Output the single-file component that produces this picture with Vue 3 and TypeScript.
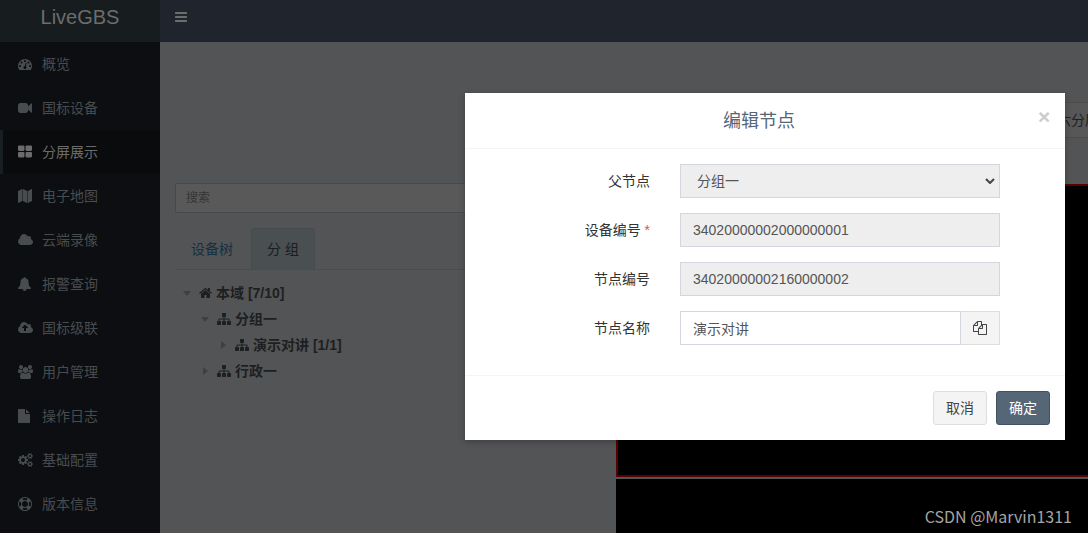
<script setup lang="ts">
import { ref } from 'vue'

interface Icon { box: string; d: string }

const cloud = 'm640 288q0 159-112.5 271.5t-271.5 112.5h-1088q-185 0-316.5-131.5t-131.5-316.5q0-132 71-241.5t187-163.5q-2-28-2-43 0-212 150-362t362-150q158 0 286.5 88t187.5 230q70-62 166-62 106 0 181 75t75 181q0 75-41 138 129 30 213 134.5t84 239.5z'
const dot = 'q0-53-37.5-90.5t-90.5-37.5-90.5 37.5-37.5 90.5 37.5 90.5 90.5 37.5 90.5-37.5 37.5-90.5z'
const pane = 'v384q0 52-38 90t-90 38h-512q-52 0-90-38t-38-90v-384q0-52 38-90t90-38h512q52 0 90 38t38 90z'
const bar = 'v128q0 26-19 45t-45 19h-1408q-26 0-45-19t-19-45v-128q0-26 19-45t45-19h1408q26 0 45 19t19 45z'
const smallCog = 'v140q0 16-149 31-12 27-30 52 51 113 51 138 0 4-4 7-122 71-124 71-8 0-46-47t-52-68q-20 2-30 2t-30-2q-14 21-52 68t-46 47q-2 0-124-71-4-3-4-7 0-25 51-138-18-25-30-52-149-15-149-31v-140q0-16 149-31 13-29 30-52-51-113-51-138 0-4 4-7 4-2 35-20t59-34 30-16q8 0 46 46.5t52 67.5q20-2 30-2t30 2q51-71 92-112l6-2q4 0 124 70 4 3 4 7 0 25-51 138 17 23 30 52 149 15 149 31z'
const cogHole = 'q0-52-38-90t-90-38-90 38-38 90q0 53 37.5 90.5t90.5 37.5 90.5-37.5 37.5-90.5z'

const icons: Record<string, Icon> = {
  bars: { box: '128 0 1536 1792', d: `M1664 1344${bar}M1664 832${bar}M1664 320${bar}` },
  dashboard: {
    box: '0 0 1792 1792',
    d: `M384 1152${dot}M576 704${dot}M1004 1185l101-382q6-26-7.5-48.5t-38.5-29.5-48 6.5-30 39.5l-101 382q-60 5-107 43.5t-63 98.5q-20 77 20 146t117 89 146-20 89-117q16-60-6-117t-72-91zM1664 1152${dot}M1024 512${dot}M1472 704${dot}M1792 1152q0 261-141 483-19 29-54 29h-1402q-35 0-54-29-141-221-141-483 0-182 71-348t191-286 286-191 348-71 348 71 286 191 191 286 71 348z`,
  },
  video: { box: '0 0 1792 1792', d: 'M1792 352v1088q0 42-39 59-13 5-25 5-27 0-45-19l-403-403v166q0 119-84.5 203.5t-203.5 84.5h-704q-119 0-203.5-84.5t-84.5-203.5v-704q0-119 84.5-203.5t203.5-84.5h704q119 0 203.5 84.5t84.5 203.5v165l403-402q18-19 45-19 12 0 25 5 39 17 39 59z' },
  panes: { box: '64 64 1664 1664', d: `M832 1024${pane}M832 256${pane}M1728 1024${pane}M1728 256${pane}` },
  map: { box: '0 0 1792 1792', d: 'M512 0q13 0 22.5 9.5t9.5 22.5v1472q0 20-17 28l-480 256q-7 4-15 4-13 0-22.5-9.5t-9.5-22.5v-1472q0-20 17-28l480-256q7-4 15-4zm1248 0q13 0 22.5 9.5t9.5 22.5v1472q0 20-17 28l-480 256q-7 4-15 4-13 0-22.5-9.5t-9.5-22.5v-1472q0-20 17-28l480-256q7-4 15-4zm-1120 0q8 0 14 3l512 256q18 10 18 29v1472q0 13-9.5 22.5t-22.5 9.5q-8 0-14-3l-512-256q-18-10-18-29v-1472q0-13 9.5-22.5t22.5-9.5z' },
  cloud: { box: '64 0 1920 1792', d: `M1344 864${cloud}` },
  bell: { box: '64 0 1664 1792', d: 'M912 1696q0-16-16-16-59 0-101.5-42.5t-42.5-101.5q0-16-16-16t-16 16q0 73 51.5 124.5t124.5 51.5q16 0 16-16zm816-288q0 52-38 90t-90 38h-448q0 106-75 181t-181 75-181-75-75-181h-448q-52 0-90-38t-38-90q50-42 91-88t85-119.5 74.5-158.5 50-206 19.5-260q0-152 117-282.5t307-158.5q-8-19-8-39 0-40 28-68t68-28 68 28 28 68q0 20-8 39 190 28 307 158.5t117 282.5q0 139 19.5 260t50 206 74.5 158.5 85 119.5 91 88z' },
  upload: { box: '64 0 1920 1792', d: `M1344 864q0-14-9-23l-352-352q-9-9-23-9t-23 9l-351 351q-10 12-10 24 0 14 9 23t23 9h224v352q0 13 9.5 22.5t22.5 9.5h192q13 0 22.5-9.5t9.5-22.5v-352h224q13 0 22.5-9.5t9.5-22.5z${cloud}` },
  users: { box: '-64 0 1920 1792', d: 'M529 896q-162 5-265 128h-134q-82 0-138-40.5t-56-118.5q0-353 124-353 6 0 43.5 21t97.5 42.5 119 21.5q67 0 133-23-5 37-5 66 0 159 81 256zm1071 637q0 120-73 189.5t-194 69.5h-874q-121 0-194-69.5t-73-189.5q0-53 3.5-103.5t14-109 26.5-108.5 43-97.5 62-81 85.5-53.5 111.5-20q10 0 43 21.5t73 48 107 48 135 21.5 135-21.5 107-48 73-48 43-21.5q61 0 111.5 20t85.5 53.5 62 81 43 97.5 26.5 108.5 14 109 3.5 103.5zm-1024-1277q0 106-75 181t-181 75-181-75-75-181 75-181 181-75 181 75 75 181zm704 384q0 159-112.5 271.5t-271.5 112.5-271.5-112.5-112.5-271.5 112.5-271.5 271.5-112.5 271.5 112.5 112.5 271.5zm576 225q0 78-56 118.5t-138 40.5h-134q-103-123-265-128 81-97 81-256 0-29-5-66 66 23 133 23 59 0 119-21.5t97.5-42.5 43.5-21q124 0 124 353zm-128-609q0 106-75 181t-181 75-181-75-75-181 75-181 181-75 181 75 75 181z' },
  file: { box: '128 0 1536 1792', d: 'M1152 512v-472q22 14 36 28l408 408q14 14 28 36h-472zm-128 32q0 40 28 68t68 28h544v1056q0 40-28 68t-68 28h-1344q-40 0-68-28t-28-68v-1600q0-40 28-68t68-28h800v544z' },
  cogs: {
    box: '-64 0 1920 1792',
    d: `M832 896q0-106-75-181t-181-75-181 75-75 181 75 181 181 75 181-75 75-181zM1600 1408${cogHole}M1600 384${cogHole}M1216 805v185q0 10-7 19.5t-16 10.5l-155 24q-11 35-32 76 34 48 90 115 7 11 7 20 0 12-7 19-23 30-82.5 89.5t-78.5 59.5q-11 0-21-7l-115-90q-37 19-77 31-11 108-23 155-7 24-30 24h-186q-11 0-20-7.5t-10-17.5l-23-153q-34-10-75-31l-118 89q-7 7-20 7-11 0-21-8-144-133-144-160 0-9 7-19 10-14 41-53t47-61q-23-44-35-82l-152-24q-10-1-17-9.5t-7-19.5v-185q0-10 7-19.5t16-10.5l155-24q11-35 32-76-34-48-90-115-7-11-7-20 0-12 7-20 22-30 82-89t79-59q11 0 21 7l115 90q34-18 77-32 11-108 23-154 7-24 30-24h186q11 0 20 7.5t10 17.5l23 153q34 10 75 31l118-89q8-7 20-7 11 0 21 8 144 133 144 160 0 8-7 19-12 16-42 54t-45 60q23 48 34 82l152 23q10 2 17 10.5t7 19.5zM1856 1338${smallCog}M1856 314${smallCog}`,
  },
  ring: { box: '0 0 1792 1792', d: 'M896 0q182 0 348 71t286 191 191 286 71 348-71 348-191 286-286 191-348 71-348-71-286-191-191-286-71-348 71-348 191-286 286-191 348-71zm0 128q-190 0-361 90l194 194q82-28 167-28t167 28l194-194q-171-90-361-90zm-678 1129l194-194q-28-82-28-167t28-167l-194-194q-90 171-90 361t90 361zm678 407q190 0 361-90l-194-194q-82 28-167 28t-167-28l-194 194q171 90 361 90zm0-384q159 0 271.5-112.5t112.5-271.5-112.5-271.5-271.5-112.5-271.5 112.5-112.5 271.5 112.5 271.5 271.5 112.5zm484-217l194 194q90-171 90-361t-90-361l-194 194q28 82 28 167t-28 167z' },
  home: { box: '64 0 1664 1792', d: 'M1472 992v480q0 26-19 45t-45 19h-384v-384h-256v384h-384q-26 0-45-19t-19-45v-480q0-1 .5-3t.5-3l575-474 575 474q1 2 1 6zm223-69l-62 74q-8 9-21 11h-3q-13 0-21-7l-692-577-692 577q-12 8-24 7-13-2-21-11l-62-74q-8-10-7-23.5t11-21.5l719-599q32-26 76-26t76 26l244 204v-195q0-14 9-23t23-9h192q14 0 23 9t9 23v408l219 182q10 8 11 21.5t-7 23.5z' },
  sitemap: { box: '0 0 1792 1792', d: 'M1792 1248v320q0 40-28 68t-68 28h-320q-40 0-68-28t-28-68v-320q0-40 28-68t68-28h96v-192h-512v192h96q40 0 68 28t28 68v320q0 40-28 68t-68 28h-320q-40 0-68-28t-28-68v-320q0-40 28-68t68-28h96v-192h-512v192h96q40 0 68 28t28 68v320q0 40-28 68t-68 28h-320q-40 0-68-28t-28-68v-320q0-40 28-68t68-28h96v-192q0-52 38-90t90-38h512v-192h-96q-40 0-68-28t-28-68v-320q0-40 28-68t68-28h320q40 0 68 28t28 68v320q0 40-28 68t-68 28h-96v192h512q52 0 90 38t38 90v192h96q40 0 68 28t28 68z' },
  copy: { box: '0 0 1792 1792', d: 'M1696 384q40 0 68 28t28 68v1216q0 40-28 68t-68 28h-960q-40 0-68-28t-28-68v-288h-544q-40 0-68-28t-28-68v-672q0-40 20-88t48-76l408-408q28-28 76-48t88-20h416q40 0 68 28t28 68v328q68-40 128-40h416zm-544 213l-299 299h299v-299zm-640-384l-299 299h299v-299zm196 647l316-316v-416h-384v416q0 40-28 68t-68 28h-416v640h512v-256q0-40 20-88t48-76zm956 804v-1152h-384v416q0 40-28 68t-68 28h-416v640h896z' },
}

const menu = [
  { icon: 'dashboard', label: '概览' },
  { icon: 'video', label: '国标设备' },
  { icon: 'panes', label: '分屏展示', active: true },
  { icon: 'map', label: '电子地图' },
  { icon: 'cloud', label: '云端录像' },
  { icon: 'bell', label: '报警查询' },
  { icon: 'upload', label: '国标级联' },
  { icon: 'users', label: '用户管理' },
  { icon: 'file', label: '操作日志' },
  { icon: 'cogs', label: '基础配置' },
  { icon: 'ring', label: '版本信息' },
]

const tree = [
  { level: 0, open: true, icon: 'home', label: '本域 [7/10]' },
  { level: 1, open: true, icon: 'sitemap', label: '分组一' },
  { level: 2, open: false, icon: 'sitemap', label: '演示对讲 [1/1]' },
  { level: 1, open: false, icon: 'sitemap', label: '行政一' },
]

const search = ref('')
const parent = ref('分组一')
const deviceId = ref('34020000002000000001')
const nodeId = ref('34020000002160000002')
const nodeName = ref('演示对讲')
</script>

<template>
  <div class="app">
    <aside class="sidebar">
      <a class="logo" href="#">LiveGBS</a>
      <nav>
        <a v-for="m in menu" :key="m.label" href="#" class="menu-item" :class="{ active: m.active }">
          <span class="menu-icon"><svg class="icon" :viewBox="icons[m.icon].box"><path fill-rule="evenodd" :d="icons[m.icon].d" /></svg></span>
          {{ m.label }}
        </a>
      </nav>
    </aside>

    <div class="main">
      <header class="topbar">
        <button class="toggle" type="button" aria-label="菜单">
          <svg class="icon" :viewBox="icons.bars.box"><path :d="icons.bars.d" /></svg>
        </button>
      </header>
      <div class="content">
        <section class="devices">
          <input v-model="search" class="search" type="text" placeholder="搜索" aria-label="搜索" />
          <div class="tabs">
            <a href="#" class="tab">设备树</a>
            <a href="#" class="tab current">分 组</a>
          </div>
          <ul class="tree">
            <li v-for="n in tree" :key="n.label" :class="'level-' + n.level">
              <span class="caret" :class="{ open: n.open }"></span>
              <svg class="icon" :viewBox="icons[n.icon].box"><path :d="icons[n.icon].d" /></svg>
              <span>{{ n.label }}</span>
            </li>
          </ul>
        </section>
        <section class="screens">
          <div class="split-bar"><button class="split" type="button">十六分屏</button></div>
          <div class="screen selected"></div>
          <div class="screen"></div>
        </section>
      </div>
    </div>

    <form class="dialog" role="dialog" aria-labelledby="dialog-title" @submit.prevent>
      <header class="dialog-head">
        <h4 id="dialog-title">编辑节点</h4>
        <button class="close" type="button" aria-label="关闭">×</button>
      </header>
      <div class="dialog-body">
        <div class="row">
          <label for="parent">父节点</label>
          <div class="field">
            <select id="parent" v-model="parent" class="control" disabled><option>分组一</option></select>
            <svg class="chevron" viewBox="0 0 10 6"><path d="M1 1l4 4 4-4" /></svg>
          </div>
        </div>
        <div class="row">
          <label for="device">设备编号 <span class="required">*</span></label>
          <div class="field"><input id="device" v-model="deviceId" class="control" type="text" disabled /></div>
        </div>
        <div class="row">
          <label for="node">节点编号</label>
          <div class="field"><input id="node" v-model="nodeId" class="control" type="text" disabled /></div>
        </div>
        <div class="row">
          <label for="name">节点名称</label>
          <div class="field">
            <input id="name" v-model="nodeName" class="control" type="text" />
            <button class="copy" type="button" aria-label="复制"><svg class="icon" :viewBox="icons.copy.box"><path :d="icons.copy.d" /></svg></button>
          </div>
        </div>
      </div>
      <footer class="dialog-foot">
        <button class="btn" type="button">取消</button>
        <button class="btn primary" type="submit">确定</button>
      </footer>
    </form>

    <div class="credit">CSDN @Marvin1311</div>
  </div>
</template>

<style>
body { margin: 0; }
</style>

<style scoped>
* { box-sizing: border-box; }
.app {
  position: relative;
  display: flex;
  height: 100vh;
  overflow: hidden;
  background: #535456;
  color: #1e1f20;
  font: 14px/20px "Liberation Sans", "Noto Sans CJK SC", sans-serif;
}
a { color: inherit; text-decoration: none; }
button, input, select { margin: 0; font: inherit; color: inherit; }
button { cursor: pointer; }
.icon { display: block; height: 14px; fill: currentColor; }

.sidebar { flex: none; width: 160px; background: #0c0e11; color: #484c4e; }
.logo {
  display: block;
  height: 42px;
  background: #171c1f;
  color: #6b6d6e;
  font-size: 20px;
  line-height: 34px;
  text-align: center;
}
.menu-item {
  display: flex;
  align-items: center;
  height: 44px;
  padding-left: 15px;
  border-left: 3px solid transparent;
}
.menu-item.active { border-color: #181f23; background: #0a0b0d; color: #6b6b6b; }
.menu-icon { width: 24px; }

.main { flex: 1; min-width: 0; display: flex; flex-direction: column; }
.topbar { flex: none; height: 42px; background: #20242c; }
.toggle { padding: 10px 15px; border: 0; background: none; color: #6b6d6e; }
.content { flex: 1; display: flex; min-height: 0; padding-left: 15px; }
.devices { flex: none; width: 441px; padding: 141px 15px 0 0; }
.search {
  display: block;
  width: 100%;
  height: 30px;
  padding: 0 10px;
  border: 1px solid #48494d;
  border-radius: 2px;
  background: #595959;
  font-size: 12px;
}
.search::placeholder { color: #353535; opacity: 1; }
.tabs { display: flex; gap: 2px; margin-top: 15px; border-bottom: 1px solid #4a4c4e; }
.tab { padding: 10px 15px; border: 1px solid transparent; border-bottom: 0; border-radius: 4px 4px 0 0; color: #15303f; }
.tab.current { border-color: #474b4e; background: #4a4f52; color: #1c1d1e; }
.tree { margin: 10px 0 0; padding: 0; list-style: none; font-weight: bold; }
.tree li { display: flex; align-items: center; height: 26px; padding-left: 8px; }
.tree li.level-1 { padding-left: 26px; }
.tree li.level-2 { padding-left: 44px; }
.tree .icon { margin-right: 4px; }
.caret { width: 16px; display: flex; }
.caret::before { content: ""; margin-left: 2px; border: 4px solid transparent; border-left: 5px solid #3f4042; border-right: 0; }
.caret.open::before { margin-left: 0; border: 4px solid transparent; border-top: 5px solid #3f4042; border-bottom: 0; }

.screens { flex: 1; min-width: 0; display: flex; flex-direction: column; gap: 2px; margin-right: -24px; }
.split-bar { flex: none; display: flex; justify-content: flex-end; height: 140px; padding-top: 60px; }
.split { flex: none; height: 36px; padding: 0 12px; border: 1px solid #4c4c4c; background: #575757; color: #1c1f24; }
.screen { flex: none; height: 293px; background: #000; }
.screen.selected { border: 2px solid #590000; }

.dialog {
  position: absolute;
  top: 93px;
  right: 23px;
  width: 600px;
  background: #fff;
  color: #333;
  box-shadow: 0 2px 6px rgba(0, 0, 0, .25);
}
.dialog-head {
  display: flex;
  align-items: flex-start;
  padding: 14px 15px;
  border-bottom: 1px solid #f4f4f4;
}
.dialog-head h4 { flex: 1; margin: 0; padding-top: 2px; color: #556677; font-size: 18px; font-weight: normal; line-height: 25px; text-align: center; }
.close { width: 12px; padding: 0; border: 0; background: none; color: #ccc; font-size: 21px; font-weight: bold; line-height: 20px; }
.dialog-body { display: flex; flex-direction: column; gap: 15px; padding: 15px 65px 30px; }
.row { display: flex; align-items: center; }
.row label { width: 120px; text-align: right; }
.required { color: #f04848; }
.field { position: relative; flex: 1; display: flex; margin-left: 30px; }
.control {
  flex: 1;
  min-width: 0;
  height: 34px;
  padding: 0 12px;
  border: 1px solid #d2d6de;
  border-radius: 0;
  background: #fff;
  color: #555;
  opacity: 1;
  appearance: none;
}
.control:disabled { background: #eee; }
select.control { padding: 0 16px; }
.chevron { position: absolute; top: 14px; right: 5px; width: 10px; height: 6px; fill: none; stroke: #444; stroke-width: 2; pointer-events: none; }
.copy { width: 39px; padding: 0 12px; border: 1px solid #ddd; border-left: 0; background: #f4f4f4; color: #444; }
.dialog-foot { display: flex; justify-content: flex-end; gap: 9px; padding: 15px; border-top: 1px solid #f4f4f4; }
.btn { height: 34px; padding: 0 12px; border: 1px solid #ddd; border-radius: 3px; background: #f4f4f4; color: #444; }
.btn.primary { border-color: #445161; background: #556677; color: #fff; }
.credit { position: absolute; right: 16px; bottom: 7px; color: #a5a5a5; font: 16px/20px "Noto Sans CJK SC", sans-serif; }
</style>
